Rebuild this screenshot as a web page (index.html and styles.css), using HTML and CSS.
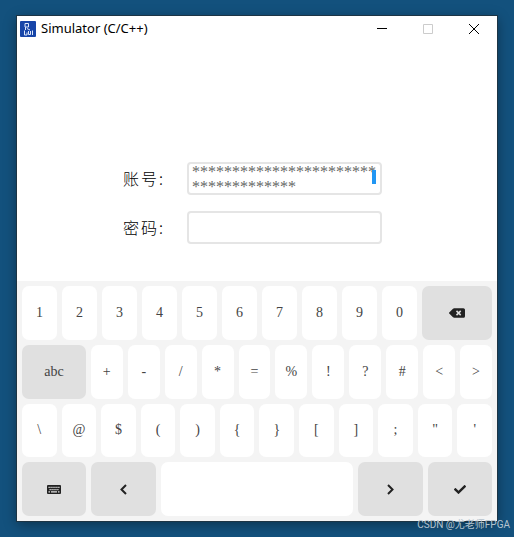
FILE: index.html
```html
<!DOCTYPE html>
<html lang="zh-CN">
<head>
    <meta charset="UTF-8">
    <meta name="viewport" content="width=device-width, initial-scale=1.0">
    <title>Simulator (C/C++)</title>
    <link rel="stylesheet" href="styles.css">
</head>
<body>

    <main class="window">
        <header class="title-bar">
            <svg class="app-icon" viewBox="0 0 16 16" aria-hidden="true">
                <rect width="16" height="16" rx="1" fill="#1745a8"/>
                <path d="M5 2.500h3.500v3.500H5zM5.500 6v3M7 7.500l3 1.500M4.500 9.500v4.500h2.500v-2.500M8.500 10v3.500h2v-3.500M12.500 9.500v4.500" fill="none" stroke="#dce6fa"/>
            </svg>
            <h1>Simulator (C/C++)</h1>
            <div class="window-buttons">
                <button type="button" aria-label="最小化">
                    <svg viewBox="0 0 10 10"><path d="M0 4.500h10"/></svg>
                </button>
                <button type="button" aria-label="最大化" disabled>
                    <svg viewBox="0 0 10 10"><path d="M.5.5h9v9h-9z"/></svg>
                </button>
                <button type="button" aria-label="关闭">
                    <svg viewBox="0 0 10 10"><path d="M0 0l10 10M10 0L0 10"/></svg>
                </button>
            </div>
        </header>

        <form class="login">
            <label for="account">账号:</label>
            <div class="field">
                <textarea id="account" spellcheck="false">************************************</textarea>
                <span class="cursor"></span>
            </div>
            <label for="password">密码:</label>
            <div class="field">
                <textarea id="password" spellcheck="false"></textarea>
            </div>
        </form>

        <!-- 键盘 -->
        <div class="keyboard">
            <div class="key-row">
                <button class="key" type="button">1</button>
                <button class="key" type="button">2</button>
                <button class="key" type="button">3</button>
                <button class="key" type="button">4</button>
                <button class="key" type="button">5</button>
                <button class="key" type="button">6</button>
                <button class="key" type="button">7</button>
                <button class="key" type="button">8</button>
                <button class="key" type="button">9</button>
                <button class="key" type="button">0</button>
                <button class="key key-wide key-control" type="button" aria-label="退格">
                    <svg class="icon-backspace" viewBox="0 64 640 384">
                        <path d="M576 64H205.260A64 64 0 0 0 160 82.750L9.370 233.370c-12.500 12.500-12.500 32.760 0 45.250L160 429.250c12 12 28.280 18.750 45.250 18.750H576c35.350 0 64-28.650 64-64V128c0-35.350-28.650-64-64-64z"/>
                        <path d="M300 172l168 168M468 172L300 340" fill="none" stroke="#e0e0e0" stroke-width="60"/>
                    </svg>
                </button>
            </div>
            <div class="key-row">
                <button class="key key-wide key-control" type="button">abc</button>
                <button class="key" type="button">+</button>
                <button class="key" type="button">-</button>
                <button class="key" type="button">/</button>
                <button class="key" type="button">*</button>
                <button class="key" type="button">=</button>
                <button class="key" type="button">%</button>
                <button class="key" type="button">!</button>
                <button class="key" type="button">?</button>
                <button class="key" type="button">#</button>
                <button class="key" type="button">&lt;</button>
                <button class="key" type="button">&gt;</button>
            </div>
            <div class="key-row">
                <button class="key" type="button">\</button>
                <button class="key" type="button">@</button>
                <button class="key" type="button">$</button>
                <button class="key" type="button">(</button>
                <button class="key" type="button">)</button>
                <button class="key" type="button">{</button>
                <button class="key" type="button">}</button>
                <button class="key" type="button">[</button>
                <button class="key" type="button">]</button>
                <button class="key" type="button">;</button>
                <button class="key" type="button">"</button>
                <button class="key" type="button">'</button>
            </div>
            <div class="key-row">
                <button class="key key-control" type="button" aria-label="隐藏键盘">
                    <svg class="icon-keyboard" viewBox="0 0 28 18">
                        <rect width="28" height="18" rx="2"/>
                        <path d="M3 4.500h22M5 9h18" fill="none" stroke="#e0e0e0" stroke-width="2.500" stroke-dasharray="2.500 1.400"/>
                        <path d="M3 13.500h3M8 13.500h12M22 13.500h3" fill="none" stroke="#e0e0e0" stroke-width="2.500"/>
                    </svg>
                </button>
                <button class="key key-control" type="button" aria-label="左移">
                    <svg class="icon-arrow" viewBox="0 0 7 11"><path d="M6 1L1.500 5.500 6 10" fill="none" stroke="#222" stroke-width="2"/></svg>
                </button>
                <button class="key key-space" type="button" aria-label="空格"></button>
                <button class="key key-control" type="button" aria-label="右移">
                    <svg class="icon-arrow" viewBox="0 0 7 11"><path d="M1 1l4.500 4.500L1 10" fill="none" stroke="#222" stroke-width="2"/></svg>
                </button>
                <button class="key key-control" type="button" aria-label="确定">
                    <svg class="icon-check" viewBox="0 65 512 382"><path d="M173.900 439.400l-166.400-166.400c-10-10-10-26.200 0-36.200l36.200-36.200c10-10 26.200-10 36.200 0L192 312.700 432.100 72.600c10-10 26.200-10 36.200 0l36.200 36.200c10 10 10 26.200 0 36.200l-294.400 294.400c-10 10-26.200 10-36.200 0z"/></svg>
                </button>
            </div>
        </div>
    </main>

    <p class="watermark">CSDN @尤老师FPGA</p>

</body>
</html>
```

FILE: styles.css
```css
* {
    margin: 0;
    padding: 0;
    box-sizing: border-box;
}

body {
    font-family: "Liberation Serif", "Noto Sans CJK SC", serif;
    background: #13517d;
    min-height: 100vh;
    padding: 16px 17px;
    position: relative;
}

button {
    border: none;
    background: none;
    font: inherit;
}

.window {
    background: #fff;
    box-shadow: 0 0 0 1px #1d3444, 0 3px 12px rgba(0, 0, 0, 0.4);
}

/* 标题栏 */
.title-bar {
    display: flex;
    align-items: center;
    height: 25px;
    padding-left: 3px;
}

.app-icon {
    width: 16px;
    height: 16px;
}

.title-bar h1 {
    flex: 1;
    margin-left: 5px;
    font: 13px/20px "Noto Sans", "Noto Sans CJK SC", sans-serif;
    padding-bottom: 2px;
    color: #000;
}

.window-buttons {
    display: flex;
}

.window-buttons button {
    display: flex;
    align-items: center;
    justify-content: center;
    width: 46px;
    height: 24px;
}

.window-buttons svg {
    width: 10px;
    height: 10px;
    fill: none;
    stroke: #000;
}

.window-buttons button:disabled svg {
    stroke: #ccc;
}

/* 登录 */
.login {
    display: grid;
    grid-template-columns: 64px minmax(0, 195px);
    align-items: center;
    row-gap: 16px;
    padding: 121px 24px 37px 106px;
}

.login label {
    padding-bottom: 2px;
    font: 300 16px "Noto Sans CJK SC", sans-serif;
    letter-spacing: 2px;
    white-space: nowrap;
    color: #000;
}

.field {
    position: relative;
    height: 33px;
}

.field textarea {
    display: block;
    width: 100%;
    height: 100%;
    padding: 0 3px;
    border: 2px solid #e5e5e5;
    border-radius: 4px;
    outline: none;
    resize: none;
    overflow: hidden;
    background: #fff;
    font: 16px/15px "Liberation Serif", serif;
    word-break: break-all;
    color: #666;
}

.cursor {
    position: absolute;
    top: 8px;
    right: 6px;
    width: 4px;
    height: 14px;
    background: #2196f3;
}

/* 键盘 */
.keyboard {
    display: flex;
    flex-direction: column;
    gap: 5px;
    height: 240px;
    padding: 5px;
    background: #f4f4f4;
}

.key-row {
    display: flex;
    flex: 1;
    gap: 5px;
}

.key {
    display: flex;
    flex: 1 1 0;
    align-items: center;
    justify-content: center;
    min-width: 0;
    border-radius: 7px;
    background: #fff;
    font-size: 14px;
    color: #444;
    cursor: pointer;
}

.key-wide {
    flex-grow: 2;
}

.key-space {
    flex-grow: 3;
}

.key-control {
    background: #e0e0e0;
}

.key svg {
    fill: #222;
}

.icon-backspace {
    width: 16px;
    height: 10px;
}

.icon-keyboard {
    width: 14px;
    height: 9px;
}

.icon-arrow {
    width: 7px;
    height: 11px;
}

.icon-check {
    width: 12px;
    height: 9px;
}

.watermark {
    position: absolute;
    right: 4px;
    bottom: 5px;
    font: 10px/14px Roboto, "Noto Sans CJK SC", sans-serif;
    color: #b4c3ce;
}
```
